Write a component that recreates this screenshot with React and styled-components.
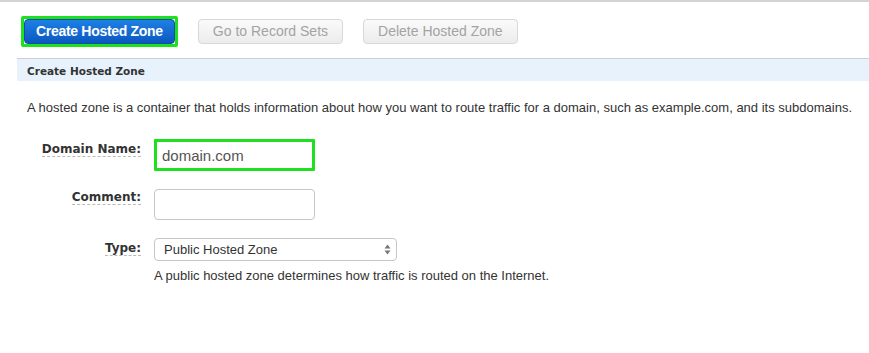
import React from 'react';
import styled, { createGlobalStyle } from 'styled-components';

const GlobalStyle = createGlobalStyle`
  html, body {
    margin: 0;
    padding: 0;
    background: #fff;
  }
  body {
    font-family: "Liberation Sans", Arial, sans-serif;
    color: #333;
  }
`;

const Page = styled.div`
  width: 869px;
  height: 353px;
  border-top: 2px solid #d4d4d4;
  box-sizing: border-box;
  overflow: hidden;
`;

const Toolbar = styled.div`
  display: flex;
  align-items: center;
  gap: 20px;
  padding: 14px 0 0 21px;
  height: 44px;
  box-sizing: border-box;
`;

const Highlight = styled.div`
  border: 3px solid #1fe01f;
  border-radius: 2px;
  display: flex;
`;

const Button = styled.button`
  height: 25px;
  padding: 0 ${p => (p.$primary ? '11px' : '14px')};
  border-radius: 4px;
  font-family: "Liberation Sans", Arial, sans-serif;
  font-size: 14px;
  cursor: pointer;
  border: 1px solid ${p => (p.$primary ? '#0b4fa5' : '#d8d8d8')};
  color: ${p => (p.$primary ? '#fff' : '#a3a3a3')};
  font-weight: ${p => (p.$primary ? 'bold' : 'normal')};
  background: ${p => (p.$primary
    ? 'linear-gradient(#1e80e4, #0b58c0)'
    : 'linear-gradient(#fafafa, #ececec)')};
  letter-spacing: ${p => (p.$primary ? '-0.3px' : '0')};
`;

const SectionHeader = styled.div`
  margin: 12px 0 0 17px;
  height: 23px;
  border-top: 1px solid #cfcfcf;
  background: #e8f2fd;
  display: flex;
  align-items: center;
  padding-left: 10px;
  padding-top: 1px;
  box-sizing: border-box;
  font-family: "DejaVu Sans", Verdana, sans-serif;
  font-weight: bold;
  font-size: 10.5px;
  color: #333;
`;

const Description = styled.p`
  margin: 19px 0 0 27px;
  font-size: 13px;
  color: #333;
`;

const Form = styled.div`
  display: grid;
  grid-template-columns: 141px auto;
  column-gap: 13px;
  row-gap: 18px;
  margin-top: 24px;
  align-items: start;
`;

const Label = styled.label`
  justify-self: end;
  margin-top: ${p => p.$offset || 2}px;
  font-family: "DejaVu Sans", Verdana, sans-serif;
  font-weight: bold;
  font-size: 12px;
  color: #333;
  border-bottom: 1px dashed #bbb;
  line-height: 14px;
`;

const TextInput = styled.input`
  width: 161px;
  height: ${p => (p.$highlight ? '32px' : '31px')};
  box-sizing: border-box;
  border: ${p => (p.$highlight ? '3px solid #1fe01f' : '1px solid #c6c6c6')};
  border-radius: ${p => (p.$highlight ? '1px' : '4px')};
  padding: 0 5px;
  font-family: "Liberation Sans", Arial, sans-serif;
  font-size: 15px;
  color: #555;
  outline: none;
`;

const SelectBox = styled.div`
  width: 243px;
  height: 23px;
  box-sizing: border-box;
  border: 1px solid #c6c6c6;
  border-radius: 4px;
  display: flex;
  align-items: center;
  justify-content: space-between;
  padding: 0 5px 0 9px;
  font-size: 13px;
  color: #333;
  background: #fff;
`;

const Field = styled.div`
  display: flex;
  flex-direction: column;
  gap: 7px;
`;

const Help = styled.div`
  font-size: 13px;
  color: #333;
`;

const Arrows = () => (
  <svg width="7" height="11" viewBox="0 0 7 11">
    <path d="M3.5 0.5 L6.5 4.5 L0.5 4.5 Z" fill="#777" />
    <path d="M3.5 10.5 L6.5 6.5 L0.5 6.5 Z" fill="#777" />
  </svg>
);

const App = () => {
  return (
    <>
      <GlobalStyle />
      <Page>
        <Toolbar>
          <Highlight>
            <Button $primary>Create Hosted Zone</Button>
          </Highlight>
          <Button>Go to Record Sets</Button>
          <Button>Delete Hosted Zone</Button>
        </Toolbar>
        <SectionHeader>Create Hosted Zone</SectionHeader>
        <Description>
          A hosted zone is a container that holds information about how you want to route traffic for a domain, such as example.com, and its subdomains.
        </Description>
        <Form>
          <Label $offset={3}>Domain Name:</Label>
          <TextInput $highlight defaultValue="domain.com" />
          <Label $offset={1}>Comment:</Label>
          <TextInput />
          <Label $offset={3}>Type:</Label>
          <Field>
            <SelectBox>
              <span>Public Hosted Zone</span>
              <Arrows />
            </SelectBox>
            <Help>A public hosted zone determines how traffic is routed on the Internet.</Help>
          </Field>
        </Form>
      </Page>
    </>
  );
};

export default App;
